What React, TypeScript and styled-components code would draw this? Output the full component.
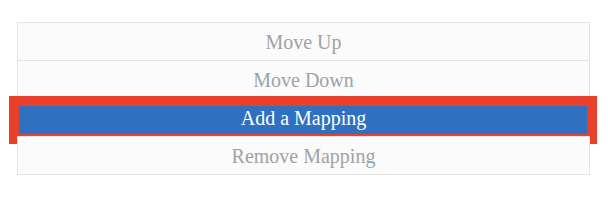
import React from "react";
import styled, { createGlobalStyle } from "styled-components";

const Global = createGlobalStyle`
  html, body { margin: 0; padding: 0; background: #ffffff; }
  body { font-family: "Liberation Serif", "Times New Roman", serif; }
`;

const Page = styled.div`
  padding: 22px 18px 0 17px;
`;

const List = styled.ul`
  list-style: none;
  margin: 0;
  padding: 0;
  display: flex;
  flex-direction: column;
  width: 573px;
`;

const Item = styled.li<{ $active?: boolean }>`
  position: relative;
  height: 37px;
  display: flex;
  align-items: center;
  justify-content: center;
  border: 1px solid ${(p) => (p.$active ? "#2f70c0" : "#e4e4e4")};
  background: ${(p) => (p.$active ? "#2f70c0" : "#fbfbfb")};
  color: ${(p) => (p.$active ? "#ffffff" : "#9da3a6")};
  font-size: 20px;
  line-height: 1;
  & + & {
    margin-top: -1px;
  }
`;

const Highlight = styled.span`
  position: absolute;
  top: -3px;
  bottom: -8px;
  left: -9px;
  right: -8px;
  border: 10px solid #e8402a;
  pointer-events: none;
`;

const items = ["Move Up", "Move Down", "Add a Mapping", "Remove Mapping"];

export default function App() {
  return (
    <>
      <Global />
      <Page>
        <List>
          {items.map((label, i) => (
            <Item key={label} $active={i === 2}>
              {label}
              {i === 2 && <Highlight />}
            </Item>
          ))}
        </List>
      </Page>
    </>
  );
}
